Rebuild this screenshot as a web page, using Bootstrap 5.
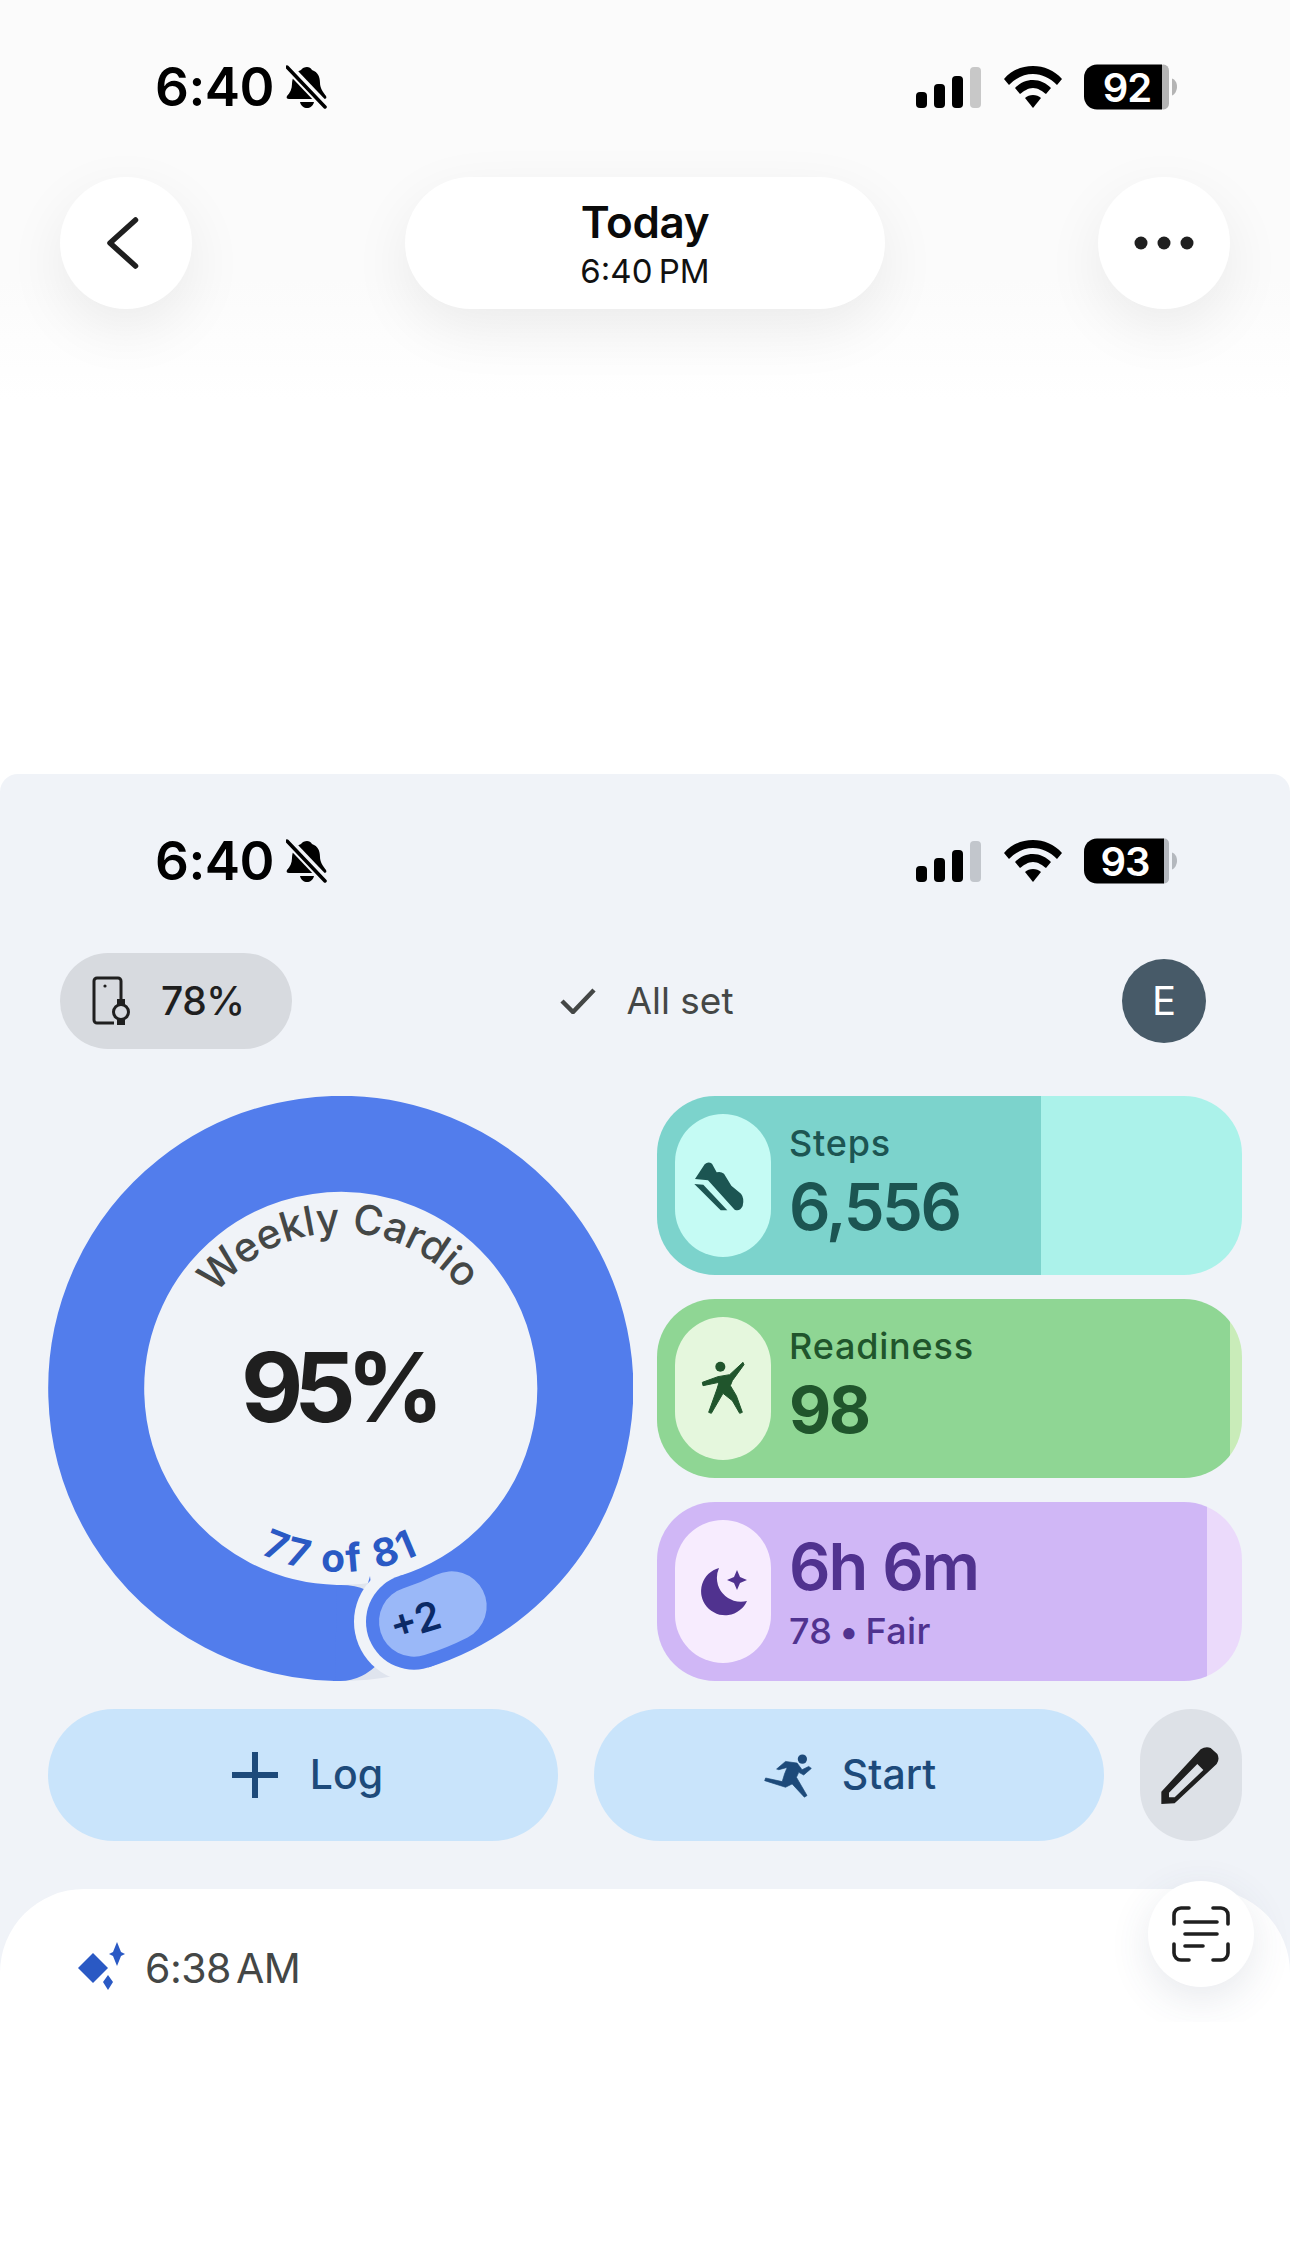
<!doctype html>
<html lang="en">
<head>
<meta charset="utf-8">
<title>Today</title>
<link href="https://cdn.jsdelivr.net/npm/bootstrap@5.3.0/dist/css/bootstrap.min.css" rel="stylesheet">
<style>
html,body{margin:0;background:#fff}
body{width:1290px;height:2248px;overflow:hidden;font-family:"Inter","Liberation Sans",sans-serif;color:#1f1f1f}
.top-hdr{height:400px;background:linear-gradient(#fbfbfb 0,#fbfbfb 70%,#fff 100%);padding:60px 60px 0}
.statbar{height:54px;padding-left:95px;padding-right:53px}
.stat-icons{gap:22.5px}
.clock{font-size:53px;font-weight:600;line-height:54px;color:#000;letter-spacing:-.5px;width:131px}
.bell{width:41px;height:45px}
.batt{width:93px;height:60px}
.batt-txt{font:600 40px "Inter","Liberation Sans",sans-serif;fill:#fff;letter-spacing:-1px}
.navrow{margin-top:63px}
.nav-circ{width:132px;height:132px;background:#fff;box-shadow:0 20px 60px rgba(0,0,0,.07)}
.nav-mid{width:480px;height:132px;background:#fff;box-shadow:0 20px 60px rgba(0,0,0,.07)}
.t1{font-size:44px;font-weight:600;line-height:50px;color:#0a0a0a;letter-spacing:-.4px}
.t2{font-size:33px;font-weight:400;line-height:38px;color:#111;margin-top:5px;word-spacing:-3px}
.panel{margin-top:374px;height:1248px;background:#f0f3f8;border-radius:18px 18px 0 0;padding-top:60px}
.panel-stat{padding:0 60px}
.chiprow{display:grid;grid-template-columns:1fr auto 1fr;padding:0 56px 0 60px;margin-top:65px;height:96px;align-items:center}
.chip-bat{width:232px;height:96px;background:#d7dadf;padding-left:32px;gap:31px;font-size:39px;font-weight:500;color:#1f1f1f;letter-spacing:-.5px}
.allset{gap:30px;font-size:37px;color:#444746}
.avatar{width:84px;height:84px;background:#475a68;color:#fff;font-size:40px;margin-right:28px}
.mainrow{padding:0 48px;margin-top:47px;gap:24px}
.ring{width:585px;height:585px;flex:none}
.r-title{font:500 41px "Inter",sans-serif;fill:#444746;letter-spacing:-.1px}
.r-val{font:700 96px "Inter",sans-serif;fill:#1f1f1f;letter-spacing:-9px}
.r-sub{font:700 39px "Inter",sans-serif;fill:#2a59c4;letter-spacing:2px;word-spacing:1.5px}
.r-plus{font:600 40px "Inter",sans-serif;fill:#0b2a66}
.tiles{width:585px;gap:24px}
.tile{height:179px;border-radius:58px;padding:18px;gap:18px;background:linear-gradient(90deg,var(--c) var(--fill),var(--t) var(--fill));color:var(--x)}
.tile-teal{--c:#7cd3cc;--t:#abf2ea;--x:#1c5552}
.tile-green{--c:#8fd694;--t:#c9ecb9;--x:#20552c}
.tile-violet{--c:#d0b7f6;--t:#ebdafb;--x:#50328f}
.tile-ic{width:96px;height:143px;border-radius:48px;flex:none}
.tile-teal .tile-ic{background:#c5fbf4}
.tile-green .tile-ic{background:#e5f7dd}
.tile-violet .tile-ic{background:#f7ecfe}
.tl{font-size:36px;font-weight:500;line-height:46px;letter-spacing:.8px}
.tv{font-size:65px;font-weight:600;line-height:76px;letter-spacing:-2.5px}
.tx-a{padding-bottom:6px}
.tx-a .tv{margin-top:3px}
.tx-b .tl{margin-top:3px;word-spacing:-3px;letter-spacing:.3px}
.tx-b .tv{word-spacing:2px;letter-spacing:-2.2px}
.tile-green .tv{font-weight:700}
.acts{padding:0 48px;margin-top:28px;gap:36px}
.act{width:510px;height:132px;background:#c9e4fb;color:#1d4a7a;font-size:41px;font-weight:500;border:0;gap:32px}
.act:hover,.act:active{background:#c9e4fb;color:#1d4a7a}
.act-log{padding-left:21px}
.act-run{gap:30px;padding-left:14px}
.act-edit{width:102px;height:132px;background:#dde1e7;border:0}
.sheet{margin-top:48px;height:200px;background:#fff;border-radius:84px 84px 0 0;padding:49px 0 0 78px;gap:19px;font-size:41px;color:#444746;word-spacing:-6px;letter-spacing:-.5px}
.scan{right:36px;top:1107px;width:106px;height:106px;background:#fff;box-shadow:0 12px 40px rgba(60,70,110,.12)}
</style>
</head>
<body>

<header class="top-hdr">
  <div class="statbar d-flex align-items-center justify-content-between">
    <div class="d-flex align-items-center">
      <span class="clock">6:40</span>
      <svg class="bell" viewBox="0 0 41 45"><path d="M21 2c2 0 4 1 5 3 6 2 8 7 8 13 0 5 3 9 6 13 1 2 0 3-2 3H3c-2 0-3-1-2-3 3-3 5-7 5-12 0-6 3-12 9-14 1-2 4-3 6-3z"/><path d="M14 37h14c-1 4-4 6-7 6s-6-2-7-6z"/><path d="M1 1l38 40" stroke="#fbfbfb" stroke-width="9"/><path d="M1 2l38 40" stroke="#000" stroke-width="3.5" stroke-linecap="round"/></svg>
    </div>
    <div class="stat-icons d-flex align-items-center">
      <svg width="65" height="41" viewBox="0 0 65 41"><rect y="25" width="11" height="16" rx="4"/><rect x="18" y="17" width="11" height="24" rx="4"/><rect x="36" y="9" width="11" height="32" rx="4"/><rect x="54" width="11" height="41" rx="4" fill="#c8c8c8"/></svg>
      <svg width="58" height="42" viewBox="0 0 58 42"><path d="M29 0c11 0 21 4 29 13l-5 6C46 12 38 8 29 8S12 12 5 19l-5-6C8 4 18 0 29 0z"/><path d="M29 14c7 0 13 3 18 8l-5 6c-4-3-8-6-13-6s-9 3-13 6l-5-6c5-5 11-8 18-8z"/><path d="M29 29c3 0 6 1 8 3l-8 10-8-10c2-2 5-3 8-3z"/></svg>
      <svg class="batt" viewBox="0 -7.5 93 60"><rect x="74" y="0" width="11" height="45" rx="6" fill="#b4b4b4"/><path d="M13 0h65v45H13A13 13 0 0 1 0 32V13A13 13 0 0 1 13 0Z"/><path d="M88 14c3 1 5 4 5 8s-2 8-5 9z" fill="#b4b4b4"/><text class="batt-txt" x="43" y="37" text-anchor="middle">92</text></svg>
    </div>
  </div>
  <div class="navrow d-flex align-items-center justify-content-between">
    <div class="nav-circ rounded-circle d-flex align-items-center justify-content-center">
      <svg width="40" height="62" viewBox="0 0 40 62"><path d="M29.5 8 4 31l25.5 23" fill="none" stroke="#1f1f1f" stroke-width="5.5" stroke-linecap="round" stroke-linejoin="round"/></svg>
    </div>
    <div class="nav-mid rounded-pill d-flex flex-column align-items-center justify-content-center">
      <div class="t1">Today</div>
      <div class="t2">6:40 PM</div>
    </div>
    <div class="nav-circ rounded-circle d-flex align-items-center justify-content-center">
      <svg width="60" height="14" viewBox="0 0 60 14"><circle cx="7" cy="7" r="6.5" fill="#1f1f1f"/><circle cx="30" cy="7" r="6.5" fill="#1f1f1f"/><circle cx="53" cy="7" r="6.5" fill="#1f1f1f"/></svg>
    </div>
  </div>
</header>

<section class="panel position-relative overflow-hidden">
  <div class="panel-stat">
    <div class="statbar d-flex align-items-center justify-content-between">
      <div class="d-flex align-items-center">
        <span class="clock">6:40</span>
        <svg class="bell" viewBox="0 0 41 45"><path d="M21 2c2 0 4 1 5 3 6 2 8 7 8 13 0 5 3 9 6 13 1 2 0 3-2 3H3c-2 0-3-1-2-3 3-3 5-7 5-12 0-6 3-12 9-14 1-2 4-3 6-3z"/><path d="M14 37h14c-1 4-4 6-7 6s-6-2-7-6z"/><path d="M1 1l38 40" stroke="#f0f3f8" stroke-width="9"/><path d="M1 2l38 40" stroke="#000" stroke-width="3.5" stroke-linecap="round"/></svg>
      </div>
      <div class="stat-icons d-flex align-items-center">
        <svg width="65" height="41" viewBox="0 0 65 41"><rect y="25" width="11" height="16" rx="4"/><rect x="18" y="17" width="11" height="24" rx="4"/><rect x="36" y="9" width="11" height="32" rx="4"/><rect x="54" width="11" height="41" rx="4" fill="#c2c6cc"/></svg>
        <svg width="58" height="42" viewBox="0 0 58 42"><path d="M29 0c11 0 21 4 29 13l-5 6C46 12 38 8 29 8S12 12 5 19l-5-6C8 4 18 0 29 0z"/><path d="M29 14c7 0 13 3 18 8l-5 6c-4-3-8-6-13-6s-9 3-13 6l-5-6c5-5 11-8 18-8z"/><path d="M29 29c3 0 6 1 8 3l-8 10-8-10c2-2 5-3 8-3z"/></svg>
        <svg class="batt" viewBox="0 -7.5 93 60"><rect x="76" y="0" width="9" height="45" rx="5" fill="#b4b8be"/><path d="M13 0h67v45H13A13 13 0 0 1 0 32V13A13 13 0 0 1 13 0Z"/><path d="M88 14c3 1 5 4 5 8s-2 8-5 9z" fill="#b4b8be"/><text class="batt-txt" x="41" y="37" text-anchor="middle">93</text></svg>
      </div>
    </div>
  </div>

  <div class="chiprow">
    <div class="chip-bat rounded-pill d-flex align-items-center">
      <svg width="38" height="50" viewBox="0 0 38 50"><path d="M22 47H5a3 3 0 0 1-3-3V5a3 3 0 0 1 3-3h21a3 3 0 0 1 3 3v18" fill="none" stroke="#1f1f1f" stroke-width="3"/><circle cx="13" cy="10" r="1.6" fill="#1f1f1f"/><circle cx="29" cy="36" r="7.5" fill="none" stroke="#1f1f1f" stroke-width="3"/><path d="M25 29v-6h8v6zM25 43v6h8v-6z" fill="#1f1f1f"/></svg>
      <span>78%</span>
    </div>
    <div class="allset d-flex align-items-center">
      <svg width="36" height="26" viewBox="0 0 36 26"><path d="M2 13l11 11L34 2" fill="none" stroke="#444746" stroke-width="4.5"/></svg>
      <span>All set</span>
    </div>
    <div class="avatar rounded-circle d-flex align-items-center justify-content-center ms-auto">E</div>
  </div>

  <div class="mainrow d-flex">
    <svg class="ring" viewBox="0 0 585 585" role="img" aria-label="Weekly Cardio 95%">
      <path d="M292.5 537A244.5 244.5 0 0 0 380 521" fill="none" stroke="#dfe4ee" stroke-width="96"/>
      <path d="M285 584.9 292.5 585Q314 585 332 566L322 480 318 494Q308 489 292.5 489L285 488.9Z" fill="#527dec"/>
      <circle cx="366" cy="525.7" r="60" fill="#f0f3f8"/>
      <path d="M366 525.7A244.5 244.5 0 1 0 288 536.9" fill="none" stroke="#527dec" stroke-width="96"/>
      <circle cx="366" cy="525.7" r="48" fill="#527dec"/>
      <path d="M366 525.7A244.5 244.5 0 0 0 403.7 510.3" fill="none" stroke="#9ab8f8" stroke-width="70" stroke-linecap="round"/>
      <defs>
        <path id="arcTop" d="M136.5 292.5A156 156 0 0 1 448.5 292.5"/>
        <path id="arcBot" d="M109 292.5A183.5 183.5 0 0 0 476 292.5"/>
      </defs>
      <text class="r-title" text-anchor="middle"><textPath href="#arcTop" startOffset="49.5%">Weekly Cardio</textPath></text>
      <text class="r-val" x="290" y="326" text-anchor="middle">95%</text>
      <text class="r-sub" text-anchor="middle"><textPath href="#arcBot" startOffset="50%">77 of 81</textPath></text>
      <text class="r-plus" x="367" y="539" text-anchor="middle" transform="rotate(-17 367 524)">+2</text>
    </svg>

    <div class="tiles d-flex flex-column">
      <div class="tile tile-teal d-flex align-items-center" style="--fill:65.6%">
        <div class="tile-ic d-flex align-items-center justify-content-center">
          <svg width="70" height="70" viewBox="6 0 210 210"><path d="M27 84 56 40Q66 30 78 38L92 64Q104 60 114 68L136 104 165 128Q176 142 170 165 162 182 146 176L66 88Z" fill="#1c5552"/><path d="M25 99 52 101 124 178H104Z" fill="#1c5552"/></svg>
        </div>
        <div class="tx-a">
          <div class="tl">Steps</div>
          <div class="tv">6,556</div>
        </div>
      </div>
      <div class="tile tile-green d-flex align-items-center" style="--fill:97.9%">
        <div class="tile-ic d-flex align-items-center justify-content-center">
          <svg width="60" height="70" viewBox="0 0 180 210"><circle cx="82" cy="38" r="15" fill="#20552c"/><path d="M28 85 75 68 110 62 150 25 153 32 118 80 112 95 130 125 148 175 140 178 118 140 90 118 55 178 47 175 72 105 78 85 30 95Z" fill="#20552c" stroke="#20552c" stroke-width="3" stroke-linejoin="round"/></svg>
        </div>
        <div class="tx-a">
          <div class="tl">Readiness</div>
          <div class="tv">98</div>
        </div>
      </div>
      <div class="tile tile-violet d-flex align-items-center" style="--fill:94%">
        <div class="tile-ic d-flex align-items-center justify-content-center">
          <svg width="49" height="48" viewBox="0 0 49 48"><path d="M20 0A24 24 0 1 0 48 33 24 24 0 0 1 20 0Z" fill="#50328f"/><path d="M38 2l3 7 7 3-7 3-3 7-3-7-7-3 7-3Z" fill="#50328f"/></svg>
        </div>
        <div class="tx-b">
          <div class="tv">6h 6m</div>
          <div class="tl">78 • Fair</div>
        </div>
      </div>
    </div>
  </div>

  <div class="acts d-flex">
    <button type="button" class="act act-log btn rounded-pill d-flex align-items-center justify-content-center">
      <svg width="46" height="46" viewBox="0 0 46 46"><path d="M23 0v46M0 23h46" stroke="#1d4a7a" stroke-width="6"/></svg>
      <span>Log</span>
    </button>
    <button type="button" class="act act-run btn rounded-pill d-flex align-items-center justify-content-center">
      <svg width="48" height="45" viewBox="30 22 145 135"><circle cx="146" cy="40" r="14" fill="#1d4a7a"/><path d="M68 70 95 47 130 52 145 72 165 62 173 68 150 88 135 80 128 95 160 150 152 155 115 115 95 125 32 105 35 97 85 108 92 85 100 65 75 72Z" fill="#1d4a7a" stroke="#1d4a7a" stroke-width="2" stroke-linejoin="round"/></svg>
      <span>Start</span>
    </button>
    <button type="button" class="act-edit btn rounded-pill d-flex align-items-center justify-content-center p-0" aria-label="Edit">
      <svg width="75" height="70" viewBox="0 0 225 210"><path fill-rule="evenodd" d="M22 192V155L140 28Q155 18 170 24L190 42Q198 58 188 72L62 190ZM45 158 130 72 148 90 62 172H45Z" fill="#1f1f1f"/></svg>
    </button>
  </div>

  <div class="sheet d-flex align-items-start">
    <svg width="48" height="48" viewBox="0 0 48 48" class="mt-1"><path d="M15 11l15 15-15 15L0 26Z" fill="#2a59c4"/><path d="M39 0l4 10 4 2-4 2-4 10-4-10-4-2 4-2ZM30 33l5 7-5 8-5-8Z" fill="#2a59c4"/></svg>
    <span>6:38 AM</span>
  </div>

  <div class="scan position-absolute rounded-circle d-flex align-items-center justify-content-center">
    <svg width="58" height="56" viewBox="0 0 58 56"><path d="M2 18V9a7 7 0 0 1 7-7h8M41 2h8a7 7 0 0 1 7 7v9M56 38v9a7 7 0 0 1-7 7h-8M17 54H9a7 7 0 0 1-7-7v-9" fill="none" stroke="#1f1f1f" stroke-width="3.6" stroke-linecap="round"/><path d="M13 16h32M13 28h32M13 40h18" fill="none" stroke="#1f1f1f" stroke-width="3.6" stroke-linecap="round"/></svg>
  </div>
</section>

<script src="https://cdn.jsdelivr.net/npm/bootstrap@5.3.0/dist/js/bootstrap.bundle.min.js"></script>
</body>
</html>
